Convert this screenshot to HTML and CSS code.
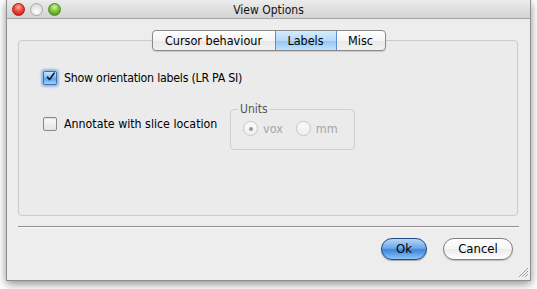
FILE: index.html
```html
<!DOCTYPE html>
<html>
<head>
<meta charset="utf-8">
<link rel="stylesheet" href="styles.css">
</head>
<body>
<div class="window">
  <div class="titlebar">
    <div class="lights">
      <span class="light red"></span>
      <span class="light grey"></span>
      <span class="light green"></span>
    </div>
    <div class="title">View Options</div>
  </div>
  <div class="content">
    <div class="tabs">
      <div class="tab first">Cursor behaviour</div>
      <div class="tab active">Labels</div>
      <div class="tab last">Misc</div>
    </div>
    <div class="pane">
      <div class="row row1">
        <span class="checkbox checked">
          <svg width="14" height="14" viewBox="0 0 14 14"><path d="M3.2 7.2 L5.8 10.3 L11.6 2.2" fill="none" stroke="#0d1a33" stroke-width="2.1" stroke-linecap="round" stroke-linejoin="round"/></svg>
        </span>
        <span class="label first-label">Show orientation labels (LR PA SI)</span>
      </div>
      <div class="row row2">
        <div class="cbwrap">
          <span class="checkbox"></span>
          <span class="label">Annotate with slice location</span>
        </div>
        <fieldset class="group">
          <legend>Units</legend>
          <div class="radios">
            <span class="radio on"><span class="dot"></span></span>
            <span class="rlabel">vox</span>
            <span class="radio"></span>
            <span class="rlabel">mm</span>
          </div>
        </fieldset>
      </div>
    </div>
    <div class="sep"></div>
    <div class="buttons">
      <div class="btn ok">Ok</div>
      <div class="btn cancel">Cancel</div>
    </div>
    <svg class="grip" width="11" height="11" viewBox="0 0 11 11">
      <path d="M10 1 L1 10 M10 4 L4 10 M10 7 L7 10" stroke="#9a9a9a" stroke-width="1"/>
      <path d="M10.8 1.8 L1.8 10.8 M10.8 4.8 L4.8 10.8 M10.8 7.8 L7.8 10.8" stroke="#ffffff" stroke-width="0.8"/>
    </svg>
  </div>
</div>
</body>
</html>
```
FILE: styles.css
```css
* { box-sizing: border-box; }
html, body { margin: 0; padding: 0; }
body {
  background: #ffffff;
  width: 537px;
  height: 289px;
  overflow: hidden;
  font-family: "DejaVu Sans Condensed", "DejaVu Sans", sans-serif;
  font-stretch: condensed;
  font-size: 12px;
  color: #000;
}
.window {
  margin-left: 6px;
  width: 525px;
  height: 281px;
  border: 1px solid #8e8e8e;
  border-top: none;
  background: #ededed;
  box-shadow: 0 3px 9px rgba(0,0,0,0.45);
  display: flex;
  flex-direction: column;
  position: relative;
}
.titlebar {
  height: 19px;
  flex: none;
  background: linear-gradient(#ececec, #d3d3d3);
  border-bottom: 1px solid #a3a3a3;
  display: flex;
  align-items: center;
  position: relative;
}
.lights {
  display: flex;
  gap: 5px;
  padding-left: 5px;
  padding-top: 1px;
}
.light {
  width: 13px;
  height: 13px;
  border-radius: 50%;
  display: block;
}
.light.red {
  background: radial-gradient(circle at 50% 30%, #ffb4a8 0%, #f0453a 45%, #b8140c 100%);
  border: 1px solid #a41e14;
}
.light.grey {
  background: radial-gradient(circle at 50% 70%, #ffffff 0%, #e4e4e4 60%, #cfcfcf 100%);
  border: 1px solid #a8a8a8;
}
.light.green {
  background: radial-gradient(circle at 50% 30%, #d8f5a8 0%, #7bc43a 45%, #3d8a14 100%);
  border: 1px solid #4a8a22;
}
.title {
  flex: 1;
  text-align: center;
  font-size: 12px;
  color: #111;
  margin-left: -54px;
  padding-top: 1px;
}
.content {
  flex: 1;
  padding: 11px 12px 0 11px;
  display: flex;
  flex-direction: column;
}
.tabs {
  align-self: center;
  margin-left: 1px;
  display: flex;
  height: 21px;
  margin-bottom: -11px;
  position: relative;
  z-index: 1;
  border: 1px solid #8a8a8a;
  border-radius: 4px;
  background: linear-gradient(#ffffff, #f4f4f4 50%, #e8e8e8 51%, #f2f2f2);
  box-shadow: 0 1px 1px rgba(0,0,0,0.15);
  overflow: hidden;
  font-size: 12.5px;
}
.tab {
  padding: 0;
  line-height: 19px;
  text-align: center;
  white-space: nowrap;
  border-right: 1px solid #8a8a8a;
}
.tab.first { width: 123px; }
.tab.active {
  width: 62px;
  background: linear-gradient(#d6ebfd, #b6d9fa 50%, #93c5f5 51%, #bfe0fd);
  border-right: 1px solid #5a8ed0;
  margin-left: -1px;
  border-left: 1px solid #5a8ed0;
}
.tab.last { width: 48px; border-right: none; }
.pane {
  height: 176px;
  flex: none;
  border: 1px solid #cbcbcb;
  border-radius: 4px;
  background: #ebebeb;
  padding: 30px 0 0 24px;
}
.row { display: flex; }
.row1 { align-items: center; height: 14px; }
.checkbox {
  width: 14px;
  height: 14px;
  flex: none;
  border-radius: 2px;
  border: 1px solid #8a8a8a;
  background: linear-gradient(#fafafa, #e4e4e4);
  box-shadow: inset 0 1px 1px rgba(0,0,0,0.1);
  display: inline-block;
}
.checkbox.checked {
  border: 1px solid #3c6fb0;
  background: linear-gradient(#cfe6fd, #7ab6f0 50%, #5aa0ea 51%, #9ed0fb);
  box-shadow: 0 0 2px 2px rgba(100,150,220,0.6);
  display: flex;
  align-items: center;
  justify-content: center;
}
.checkbox.checked svg { display: block; margin-top: -2px; margin-left: 1px; }
.label { margin-left: 7px; white-space: nowrap; font-size: 12.3px; }
.first-label { letter-spacing: -0.25px; }
.row2 { margin-top: 17px; align-items: flex-start; }
.cbwrap {
  display: flex;
  align-items: center;
  margin-top: 15px;
  width: 187px;
}
.group {
  margin: 0;
  width: 125px;
  height: 48px;
  border: 1px solid #cfcfcf;
  border-radius: 4px;
  padding: 0 0 0 12px;
  min-width: 0;
}
.group legend {
  padding: 0 2px;
  margin-left: -5px;
  color: #555;
  font-size: 12px;
  line-height: 14px;
}
.radios {
  display: flex;
  align-items: center;
  margin-top: 5px;
}
.radio {
  width: 15px;
  height: 15px;
  border-radius: 50%;
  border: 1px solid #c6c6c6;
  background: linear-gradient(#fbfbfb, #efefef);
  display: flex;
  align-items: center;
  justify-content: center;
  flex: none;
}
.radio .dot {
  width: 4px;
  height: 4px;
  border-radius: 50%;
  background: #9a9a9a;
}
.rlabel { color: #a6a6a6; margin-left: 5px; margin-right: 13px; font-size: 12.5px; }
.sep {
  margin-top: 10px;
  height: 2px;
  border-top: 1px solid #8f8f8f;
  border-bottom: 1px solid #fafafa;
  margin-right: -1px;
}
.buttons {
  display: flex;
  justify-content: flex-end;
  gap: 16px;
  margin-top: 10px;
  padding-right: 5px;
}
.btn {
  height: 22px;
  border-radius: 11px;
  line-height: 20px;
  text-align: center;
  font-size: 13px;
}
.ok {
  width: 46px;
  border: 1px solid #1f4a85;
  background: linear-gradient(#b4d6f7, #6fa9e6 45%, #3d86dc 55%, #8cc6f8);
  box-shadow: 0 1px 1px rgba(0,0,0,0.3);
}
.cancel {
  width: 70px;
  border: 1px solid #7e7e7e;
  background: linear-gradient(#ffffff, #f6f6f6 50%, #ebebeb 51%, #ffffff);
  box-shadow: 0 1px 1px rgba(0,0,0,0.2);
}
.grip {
  position: absolute;
  right: 1px;
  bottom: 2px;
}
```
